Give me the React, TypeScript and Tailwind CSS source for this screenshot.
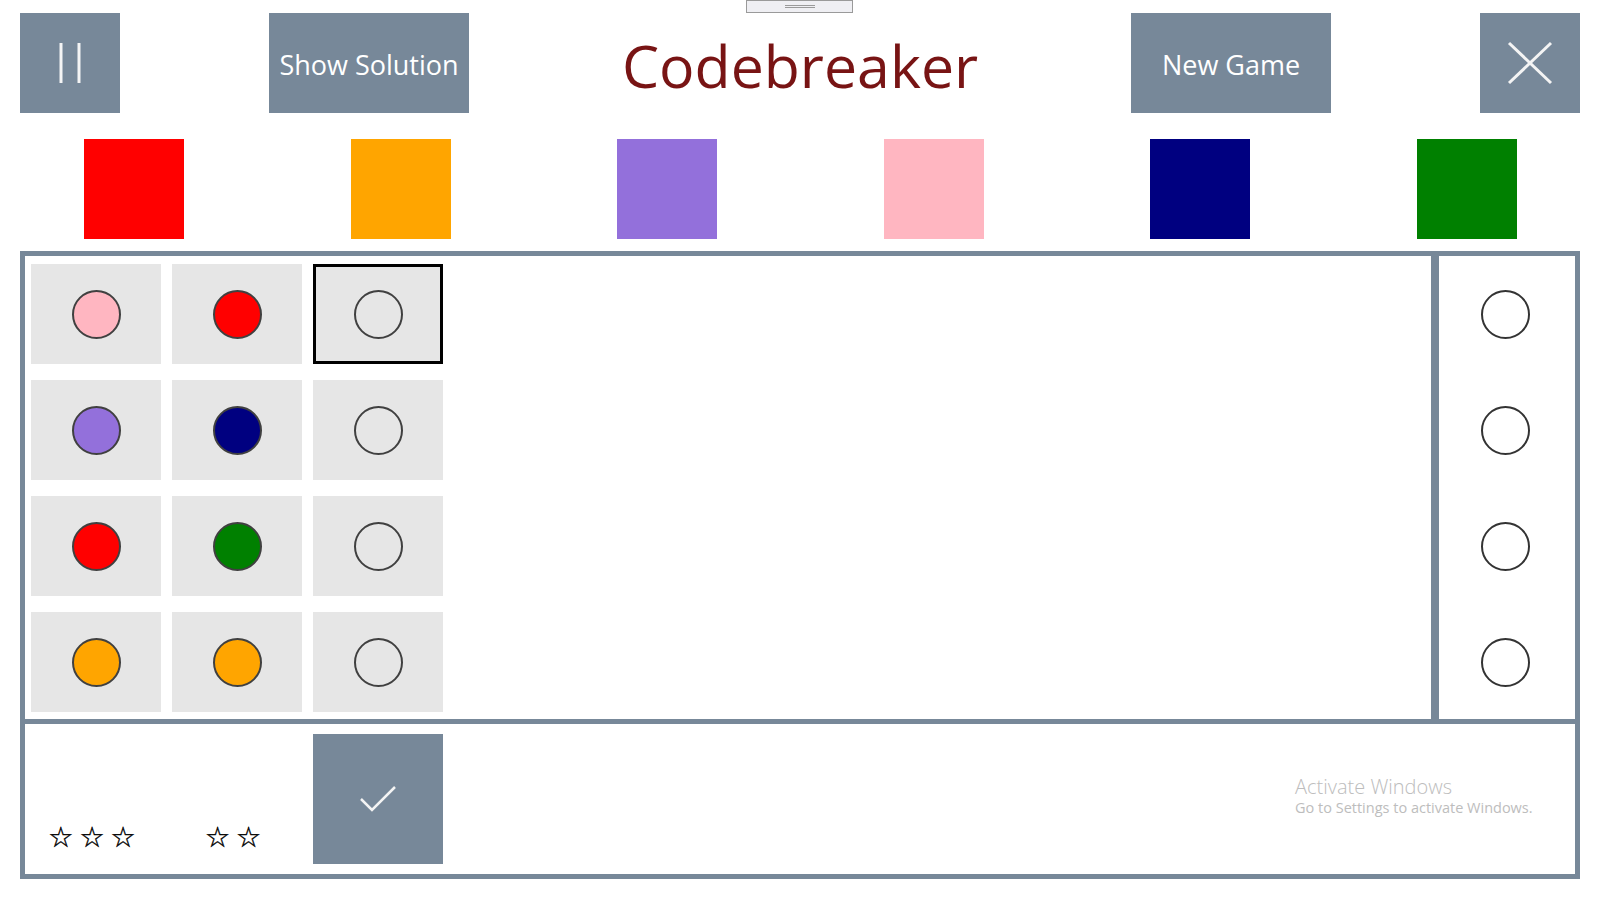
import React from "react";

const SLATE = "bg-[#778899]";

function Peg({ color }: { color?: string }) {
  return (
    <div
      className="w-[49px] h-[49px] rounded-full border-2 border-[#404040]"
      style={{ backgroundColor: color ?? "transparent" }}
    />
  );
}

const rows: (string | undefined)[][] = [
  ["#ffb6c1", "#ff0000", undefined],
  ["#9370db", "#000080", undefined],
  ["#ff0000", "#008000", undefined],
  ["#ffa500", "#ffa500", undefined],
];

const palette = ["#ff0000", "#ffa500", "#9370db", "#ffb6c1", "#000080", "#008000"];

function Stars({ n }: { n: number }) {
  return (
    <div className="flex gap-[6px]" style={{ fontFamily: '"DejaVu Sans", sans-serif' }}>
      {Array.from({ length: n }).map((_, i) => (
        <span key={i} className="text-[28px] leading-none text-black [-webkit-text-stroke:0.4px_black]">
          ☆
        </span>
      ))}
    </div>
  );
}

export default function App() {
  return (
    <div
      className="relative w-[1600px] h-[900px] bg-white overflow-hidden"
      style={{ fontFamily: '"Open Sans", "Noto Sans", sans-serif' }}
    >
      {/* top drag handle */}
      <div className="absolute left-[746px] top-0 w-[107px] h-[13px] bg-[#efeff3] border border-[#9a9a9a] flex flex-col items-center justify-center gap-[1px]">
        <div className="w-[30px] h-px bg-[#9a9a9a]" />
        <div className="w-[30px] h-px bg-[#9a9a9a]" />
      </div>

      {/* header */}
      <div className="flex items-center px-[20px] pt-[13px]">
        <div className={`w-[100px] h-[100px] ${SLATE} flex items-center justify-center`}>
          <svg width="40" height="44" viewBox="0 0 40 44">
            <line x1="11" y1="2" x2="11" y2="42" stroke="#f4f4f4" strokeWidth="3" />
            <line x1="29" y1="2" x2="29" y2="42" stroke="#f4f4f4" strokeWidth="3" />
          </svg>
        </div>
        <div className={`ml-[149px] w-[200px] h-[100px] ${SLATE} flex items-center justify-center text-white text-[27px] pt-[4px]`}>
          Show Solution
        </div>
        <div className="flex-1 flex justify-center items-center h-[100px]">
          <span className="text-[59px] leading-none text-[#781414] pt-[4px]">Codebreaker</span>
        </div>
        <div className={`w-[200px] h-[100px] ${SLATE} flex items-center justify-center text-white text-[27px] pt-[4px]`}>
          New Game
        </div>
        <div className={`ml-[149px] w-[100px] h-[100px] ${SLATE} flex items-center justify-center`}>
          <svg width="46" height="44" viewBox="0 0 46 44">
            <line x1="2" y1="2" x2="44" y2="42" stroke="#f4f4f4" strokeWidth="3" />
            <line x1="44" y1="2" x2="2" y2="42" stroke="#f4f4f4" strokeWidth="3" />
          </svg>
        </div>
      </div>

      {/* palette */}
      <div className="grid grid-cols-6 mt-[26px] pl-[1px]">
        {palette.map((c) => (
          <div key={c} className="flex justify-center">
            <div className="w-[100px] h-[100px]" style={{ backgroundColor: c }} />
          </div>
        ))}
      </div>

      {/* board */}
      <div className="mx-[20px] mt-[12px] border-[5px] border-[#778899] flex flex-col">
        <div className="flex h-[463px]">
          <div className="flex-1 pl-[6px] pt-[8px] flex flex-col gap-[16px]">
            {rows.map((r, i) => (
              <div key={i} className="flex gap-[11px]">
                {r.map((c, j) => (
                  <div
                    key={j}
                    className={`w-[130px] h-[100px] bg-[#e6e6e6] flex items-center justify-center ${
                      i === 0 && j === 2 ? "border-[3px] border-black" : ""
                    }`}
                  >
                    <Peg color={c} />
                  </div>
                ))}
              </div>
            ))}
          </div>
          <div className="w-[8px] bg-[#778899]" />
          <div className="w-[136px] pt-[8px] pr-[4px] flex flex-col gap-[16px] items-center">
            {[0, 1, 2, 3].map((i) => (
              <div key={i} className="h-[100px] flex items-center justify-center">
                <div className="w-[49px] h-[49px] rounded-full border-2 border-[#333] bg-white" />
              </div>
            ))}
          </div>
        </div>
        <div className="h-[5px] bg-[#778899]" />
        <div className="h-[150px] flex pl-[6px] gap-[11px]">
          <div className="w-[130px] flex items-end justify-center pb-[22px] pr-[8px]">
            <Stars n={3} />
          </div>
          <div className="w-[130px] flex items-end justify-center pb-[22px] pr-[8px]">
            <Stars n={2} />
          </div>
          <div className="pt-[10px]">
            <div className={`w-[130px] h-[130px] ${SLATE} flex items-center justify-center`}>
              <svg width="36" height="26" viewBox="0 0 36 26">
                <polyline points="1,13 12,24 35,1" fill="none" stroke="#f4f4f4" strokeWidth="2.5" />
              </svg>
            </div>
          </div>
        </div>
      </div>

      {/* activate windows watermark */}
      <div className="absolute left-[1295px] top-[774px] text-[#bdbdbd] leading-tight">
        <div className="text-[20px] font-light">Activate Windows</div>
        <div className="text-[14.5px]">Go to Settings to activate Windows.</div>
      </div>
    </div>
  );
}
